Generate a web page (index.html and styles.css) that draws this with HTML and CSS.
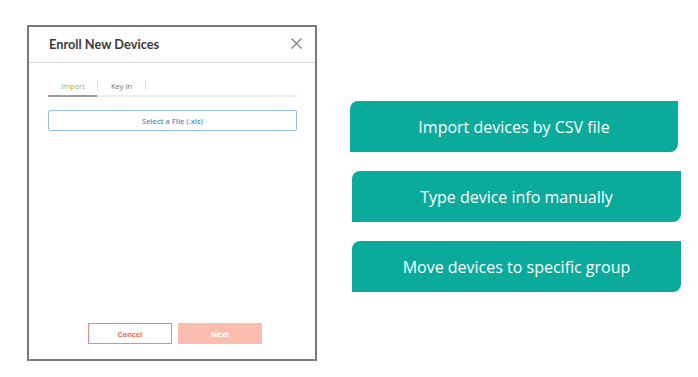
FILE: index.html
```html
<!DOCTYPE html>
<html>
<head>
<meta charset="utf-8">
<link rel="stylesheet" href="styles.css">
</head>
<body>
<div class="page">
  <div class="dialog">
    <div class="dlg-head">
      <div class="dlg-title">Enroll New Devices</div>
      <svg class="close" width="11" height="11" viewBox="0 0 11 11"><path d="M0.5 0.5L10.5 10.5M10.5 0.5L0.5 10.5" stroke="#777" stroke-width="1.1" fill="none"/></svg>
    </div>
    <div class="dlg-body">
      <div class="tabs">
        <div class="tab active">Import</div>
        <div class="tab">Key In</div>
      </div>
      <div class="select-btn">Select a File (.xls)</div>
      <div class="spacer"></div>
      <div class="actions">
        <div class="btn cancel">Cancel</div>
        <div class="btn next">Next</div>
      </div>
    </div>
  </div>
  <div class="notes">
    <div class="note n1">Import devices by CSV file</div>
    <div class="note n2">Type device info manually</div>
    <div class="note n3">Move devices to specific group</div>
  </div>
</div>
</body>
</html>
```
FILE: styles.css
```css
html, body { margin: 0; padding: 0; background: #fff; }
.page {
  width: 698px; height: 377px;
  display: flex; align-items: flex-start;
  font-family: "Open Sans", "Liberation Sans", sans-serif;
}
.dialog {
  margin: 25px 0 0 27px;
  width: 286px; height: 332px;
  border: 2px solid #7a7a7a;
  display: flex; flex-direction: column;
  background: #fff;
}
.dlg-head {
  height: 35px;
  border-bottom: 1px solid #d6d6d6;
  display: flex; align-items: center; justify-content: space-between;
  padding: 0 13px 0 20px;
}
.dlg-title {
  font-family: "Lato", sans-serif;
  font-weight: 700; font-size: 12.8px; color: #3a3a3a;
  margin-top: -1px;
}
.close { margin-top: -2px; }
.dlg-body {
  flex: 1;
  display: flex; flex-direction: column;
  padding: 16px 18px 15px 19px;
}
.tabs {
  display: flex;
  border-bottom: 2px solid #eeeeee;
  height: 16px;
}
.tab {
  font-size: 7.5px; color: #707070;
  padding: 0 13px;
  position: relative;
  line-height: 12px;
  border-right: 1px solid #e2e2e2;
  height: 11px;
  margin-top: 1px;
}
.tab.active {
  color: #86bd48;
  width: 23px;
  padding: 0 13px;
}
.tab.active::after {
  content: ""; position: absolute; left: 0; right: 0; bottom: -6px;
  height: 2px; background: #9a9a9a;
}
.select-btn {
  margin-top: 13px;
  height: 19px;
  border: 1.5px solid #93bfe0;
  border-radius: 2px;
  display: flex; align-items: center; justify-content: center;
  font-size: 7.5px; font-weight: 600; color: #4d93cf;
}
.spacer { flex: 1; }
.actions {
  display: flex; gap: 6px; padding-left: 40px;
}
.btn {
  width: 84px; height: 21px;
  display: flex; align-items: center; justify-content: center;
  font-size: 7.5px; font-weight: 700;
  box-sizing: border-box;
}
.cancel { border: 1.5px solid #f0877a; color: #e8705f; }
.next { background: #fcbdb1; color: #fff; }
.notes {
  margin-top: 101px; margin-left: 33px;
  display: flex; flex-direction: column; gap: 19px;
}
.note {
  background: #0aab9b;
  color: #fff;
  height: 51px;
  display: flex; align-items: center; justify-content: center;
  font-size: 16px;
  border-radius: 8px 0 8px 0;
}
.n1 { width: 328px; }
.n2, .n3 { width: 329px; margin-left: 2px; }
```
